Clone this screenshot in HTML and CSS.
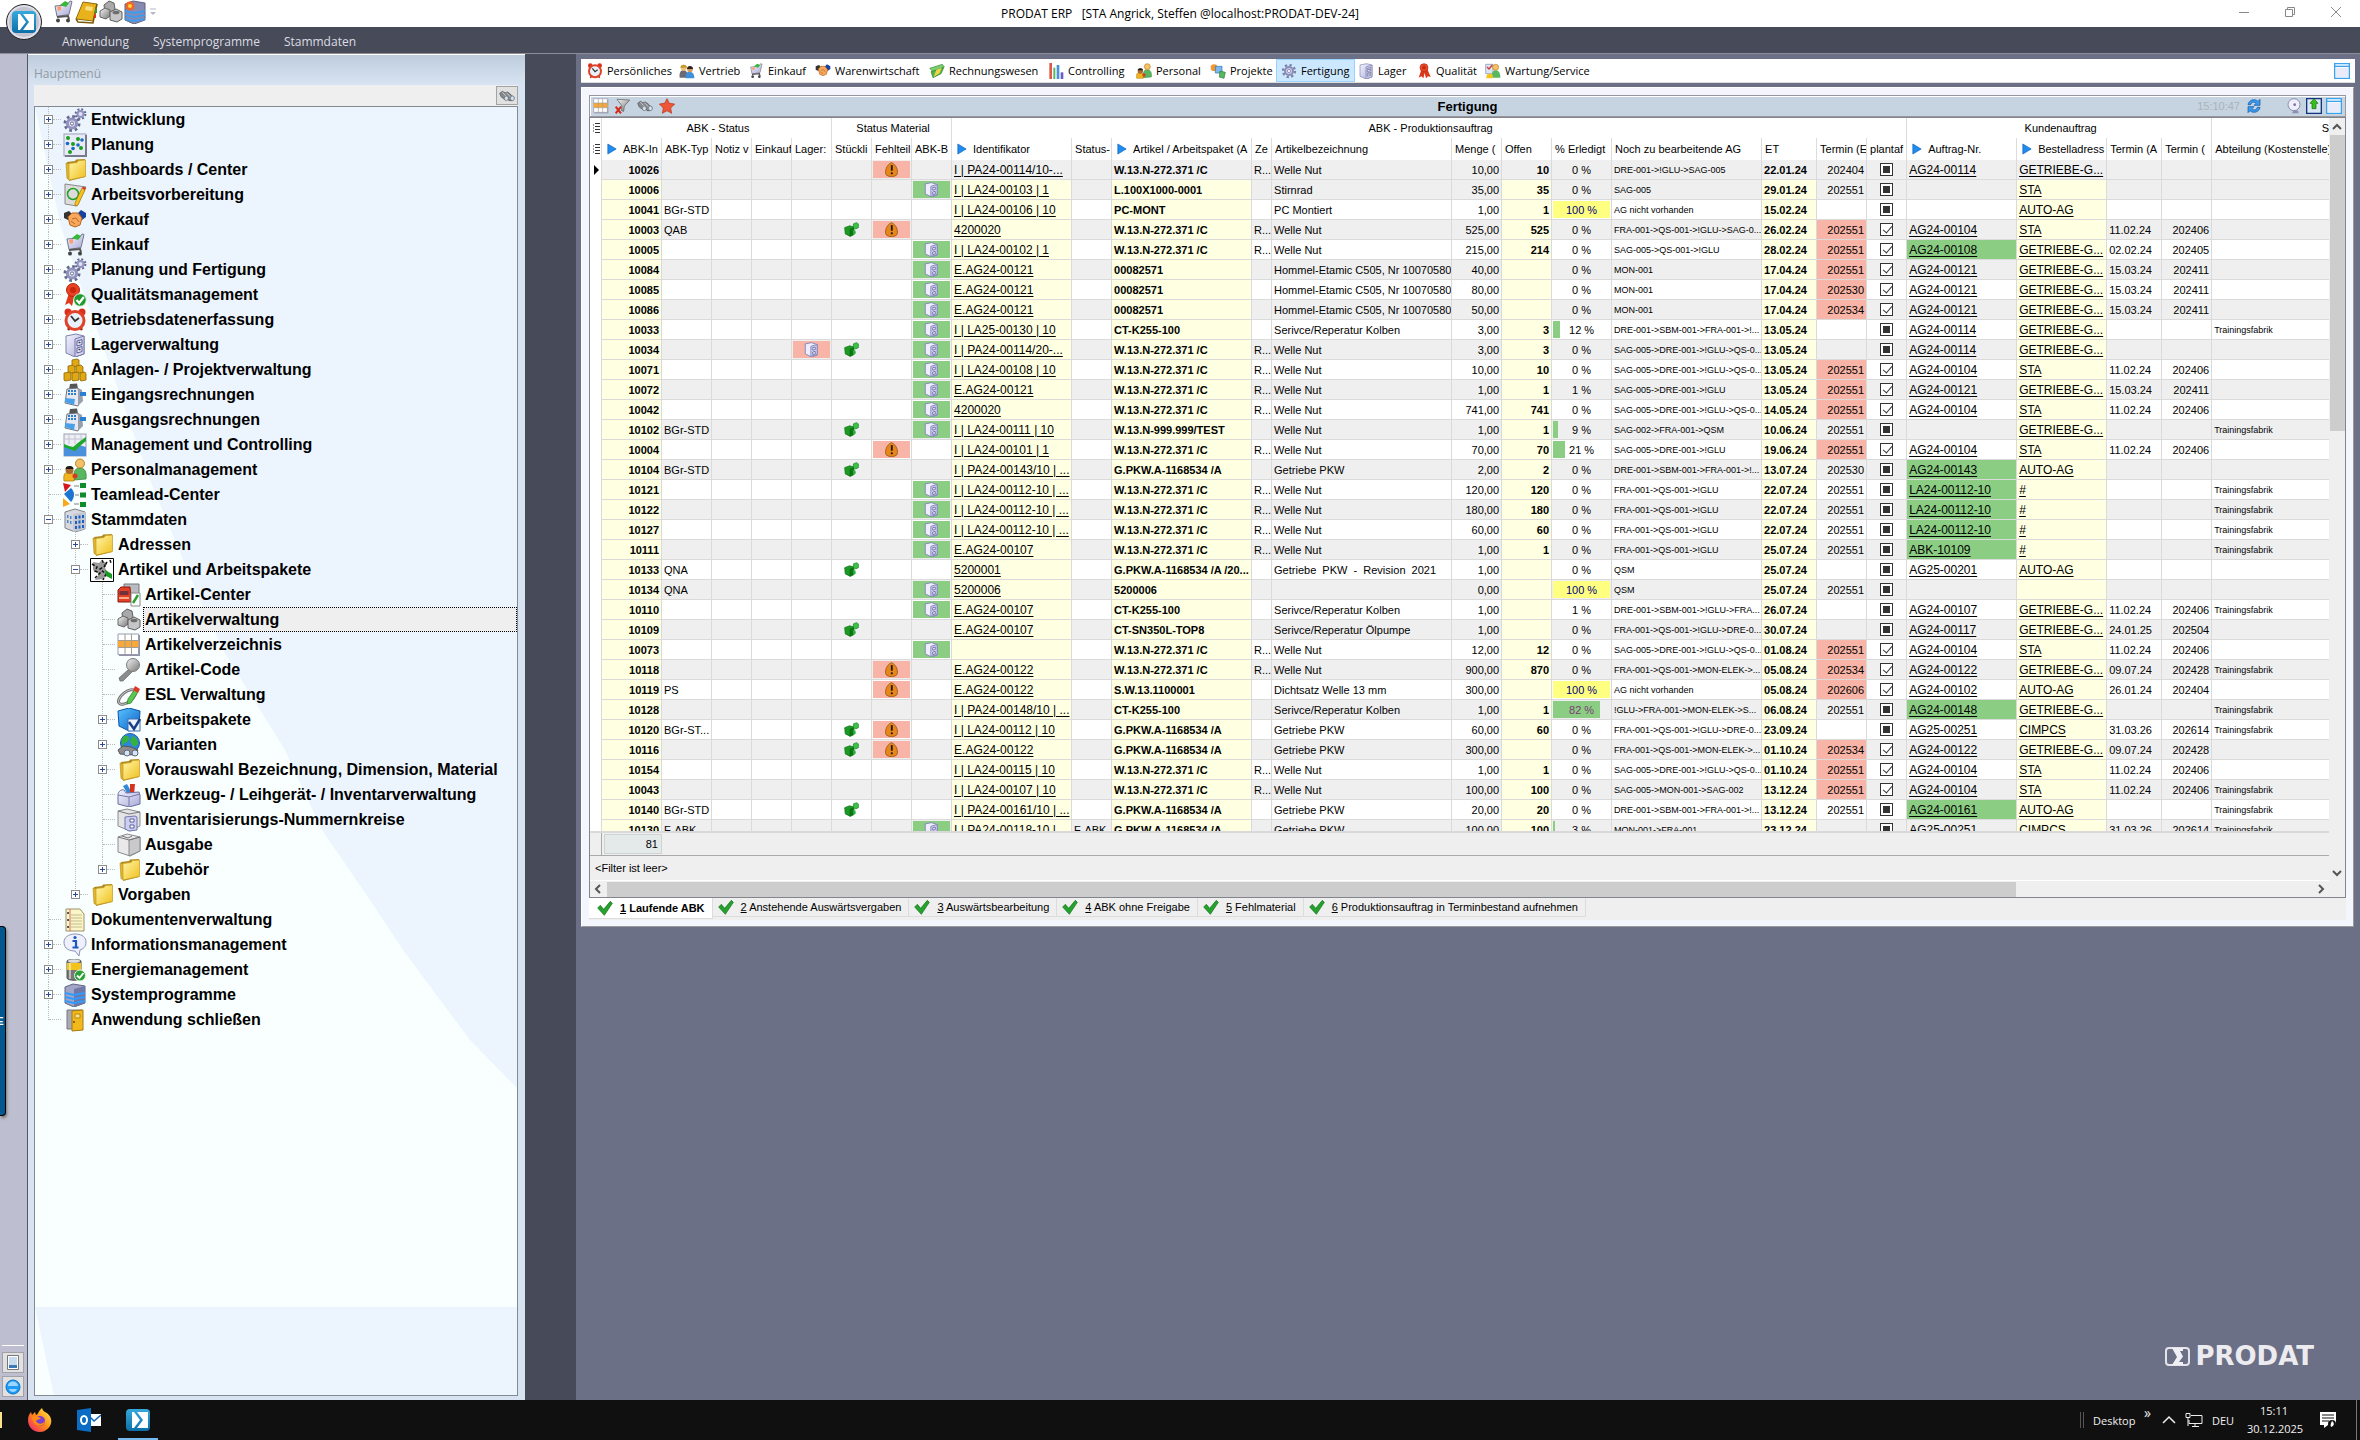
FILE: index.html
```html
<!DOCTYPE html>
<html lang="de">
<head>
<meta charset="utf-8">
<meta name="viewport" content="width=device-width, initial-scale=1">
<title>PRODAT ERP</title>
<link rel="stylesheet" href="styles.css">
</head>
<body>
<svg class="sprite" aria-hidden="true">
<defs>
<linearGradient id="gFold" x1="0" y1="0" x2="1" y2="1"><stop offset="0" stop-color="#fff6a8"/><stop offset="1" stop-color="#f0bf1c"/></linearGradient>
<linearGradient id="gMetal" x1="0" y1="0" x2="1" y2="1"><stop offset="0" stop-color="#f4f4f4"/><stop offset="1" stop-color="#777"/></linearGradient>
<linearGradient id="gLav" x1="0" y1="0" x2="1" y2="1"><stop offset="0" stop-color="#f4f4ff"/><stop offset="1" stop-color="#a9aad6"/></linearGradient>
<linearGradient id="gBlue" x1="0" y1="0" x2="1" y2="1"><stop offset="0" stop-color="#5cc4ff"/><stop offset="1" stop-color="#0a5fc4"/></linearGradient>
<linearGradient id="gFire" x1="1" y1="0" x2="0" y2="1"><stop offset="0" stop-color="#fff44f"/><stop offset=".5" stop-color="#ff8a16"/><stop offset="1" stop-color="#f0197a"/></linearGradient>
<linearGradient id="gPro" x1="0" y1="0" x2="0" y2="1"><stop offset="0" stop-color="#36a9dc"/><stop offset="1" stop-color="#0b6fa8"/></linearGradient>
</defs>
<symbol id="gear" viewBox="0 0 24 24"><circle cx="12" cy="12" r="9" fill="none" stroke="#7c7fa6" stroke-width="3.4" stroke-dasharray="3.5 3.5"/><circle cx="12" cy="12" r="6" fill="#cfd0ee" stroke="#8a8cb8" stroke-width="3"/><circle cx="12" cy="12" r="2.4" fill="#fff" stroke="#6d6f98"/></symbol>
<symbol id="gears" viewBox="0 0 24 24"><circle cx="9" cy="15.5" r="7" fill="none" stroke="#66698f" stroke-width="3" stroke-dasharray="2.7 2.8"/><circle cx="9" cy="15.5" r="4.6" fill="#dfe0f5" stroke="#9193bd" stroke-width="3"/><circle cx="9" cy="15.5" r="1.6" fill="#fff" stroke="#66698f"/><circle cx="17.5" cy="6" r="4.8" fill="none" stroke="#66698f" stroke-width="2.2" stroke-dasharray="1.9 1.9"/><circle cx="17.5" cy="6" r="3" fill="#dfe0f5" stroke="#9193bd" stroke-width="2"/></symbol>
<symbol id="plan" viewBox="0 0 24 24"><rect x="1" y="1" width="22" height="22" fill="#e9eaf8" stroke="#9ea0b8"/><path d="M23 2v21H2" fill="none" stroke="#77798c" stroke-width="2"/><g fill="#18a018"><circle cx="5" cy="5" r="2"/><circle cx="10" cy="11" r="2"/><circle cx="15" cy="6" r="2"/><circle cx="18" cy="15" r="2"/><circle cx="7" cy="19" r="2"/></g><g fill="#1668c8"><circle cx="4.500" cy="10.500" r="1.800"/><circle cx="19" cy="7" r="1.800"/><circle cx="15" cy="12" r="1.800"/><circle cx="10" cy="15.500" r="1.800"/></g></symbol>
<symbol id="folder" viewBox="0 0 24 24"><path d="M4 4l8-1 1-1.500 9-.5v18l-16 4z" fill="#b08a1d"/><path d="M3 5l4 1v16l-3-1.500z" fill="#e3b52a" stroke="#b08a1d" stroke-width=".6"/><path d="M6 5.500l8-1 1.500-2 7-.5v16.500L6 22z" fill="url(#gFold)" stroke="#c49a1f" stroke-width=".7"/></symbol>
<symbol id="draft" viewBox="0 0 24 24"><path d="M2 1l21 3-9 19-12-2z" fill="#dcdcdc" stroke="#8a8a8a"/><circle cx="10" cy="11" r="5.500" fill="none" stroke="#1fa01f" stroke-width="1.500"/><path d="M19 5l3 2-7 15-3 1 0-3z" fill="#f6c21c" stroke="#a87a10" stroke-width=".7"/><path d="M19 5l3 2 1-2-3-1.500z" fill="#d8321e"/></symbol>
<symbol id="shake" viewBox="0 0 24 24"><path d="M1 5l5-2 3 3-4 6-4-2z" fill="#333"/><path d="M23 5l-5-3-4 4 5 6 4-3z" fill="#1740a0"/><path d="M5 9l4-4h6l4 5-2 7-5 2-5-2z" fill="#f6a85e" stroke="#bb6218"/><path d="M9 11l4-1 3 4M8 13l4 3" fill="none" stroke="#c46a20"/></symbol>
<symbol id="cart" viewBox="0 0 24 24"><path d="M4 6l12-1 3-4 2 .5-3 13-12 2z" fill="url(#gLav)" stroke="#77788c"/><path d="M9 5l5-4 4 2-3 4z" fill="#38b838"/><path d="M6 7l4-1v4l-3 1z" fill="#ff9d72"/><path d="M6 17l11-1 1 3" fill="none" stroke="#555" stroke-width="2"/><circle cx="7" cy="20.500" r="2" fill="#444"/><circle cx="17" cy="20.500" r="2" fill="#444"/></symbol>
<symbol id="ribbon" viewBox="0 0 24 24"><path d="M8 10L4 22l4-2 3 3 2-8 2 8 3-3 4 1-5-12z" fill="#d93a1e"/><circle cx="12" cy="7" r="6" fill="#ea4a2a" stroke="#b12a12"/><circle cx="12" cy="7" r="2.800" fill="#c92b12"/></symbol>
<symbol id="award" viewBox="0 0 24 24"><path d="M6 10L2 22l4-2 3 3 2-8 1-5z" fill="#e03a1e"/><circle cx="10" cy="7" r="6.500" fill="#ea4024" stroke="#b12a12"/><circle cx="10" cy="7" r="3" fill="#c9260f"/><circle cx="17" cy="17" r="6.300" fill="#1f9a2c" stroke="#e9f6ea"/><path d="M13.500 17l2.800 3 4.500-6" fill="none" stroke="#fff" stroke-width="2.200"/></symbol>
<symbol id="clock" viewBox="0 0 24 24"><circle cx="5" cy="4" r="3.500" fill="#d8321e"/><circle cx="19" cy="4" r="3.500" fill="#d8321e"/><path d="M5 22l3-4M19 22l-3-4" stroke="#a02010" stroke-width="2.500"/><circle cx="12" cy="12.500" r="9" fill="#e8f2fb" stroke="#e0432a" stroke-width="3"/><path d="M8 8l4 5 4-3" fill="none" stroke="#333" stroke-width="1.800"/></symbol>
<symbol id="cabinet" viewBox="0 0 24 24"><path d="M3 3l10-2 8 2v18l-9 3-9-4z" fill="url(#gLav)" stroke="#8284ad"/><path d="M12 6v18l9-3V3z" fill="#d2d3f0" stroke="#7779a5"/><path d="M14 8l5-1.500v5L14 13zM14 15l5-1.500v5L14 20z" fill="#eef" stroke="#5d5f95"/><path d="M15.500 9.500h2M15.500 16.500h2" stroke="#334" stroke-width="1.500"/></symbol>
<symbol id="drawer" viewBox="0 0 24 24"><path d="M2 3l10-2 9 3v17l-9 3-10-5z" fill="#eeeeff" stroke="#8587b8" stroke-width="1.500"/><path d="M11 7v16l10-3V4z" fill="#d6d7f6" stroke="#7f81b4" stroke-width="1.500"/><path d="M14 9l4-1v4l-4 1zM14 16l4-1v4l-4 1z" fill="#fff" stroke="#6a6ca6" stroke-width="1.500"/></symbol>
<symbol id="gold" viewBox="0 0 24 24"><g fill="#e0a812" stroke="#8d6607" stroke-width=".8"><path d="M9 2l5-1 2 1v6l-6 1-1-1z"/><path d="M5 8l5-1 2 2v6l-6 0-1-1z"/><path d="M13 8l5-1 2 2v6h-6l-1-1z"/><path d="M1 15l6-1 1 2v6l-6 1-1-1z"/><path d="M9 15l6-1 1 2v6l-6 1-1-1z"/><path d="M17 15l5-1 1 2v6l-5 1-1-1z"/></g></symbol>
<symbol id="register" viewBox="0 0 24 24"><path d="M7 1l7-.500 1 5-9 1z" fill="#555"/><path d="M4 6l11-1 2 12-2 6-13-3z" fill="#e6e9f0" stroke="#70747e"/><path d="M15 5l4 2 1 11-5 5z" fill="#9aa0ab"/><path d="M5 8h8M5 11h8" stroke="#2b7fd0" stroke-width="2" stroke-dasharray="2 1"/><path d="M2 15l10 1-1 6-9-3z" fill="#49a0ea"/><path d="M17 9h6v4h-6z" fill="#2b7fd0"/></symbol>
<symbol id="chart" viewBox="0 0 24 24"><rect x="1" y="1" width="22" height="22" fill="#eeeef6" stroke="#9ea0b0"/><path d="M6 1v10M12 1v10M18 1v10M1 6h22" stroke="#c3c4d4"/><path d="M1 13l5 2 4 2 6-5 7 2v9H1z" fill="#4a90dc"/><path d="M1 11l5 2 4 1 6-5 7-5v4l-6 5-5 5-6-2-5-2z" fill="#1ea82c"/></symbol>
<symbol id="people" viewBox="0 0 24 24"><path d="M11 22c-1-10 2-12 6-12s7 3 6 11z" fill="#58b860" stroke="#2b7d33" stroke-width=".7"/><circle cx="17" cy="5.500" r="4.500" fill="#f4c169" stroke="#b98425"/><path d="M1 23c-1-7 1-9 5-9s6 3 5 9z" fill="#f1b41e" stroke="#a87808" stroke-width=".7"/><circle cx="6.500" cy="12" r="4" fill="#a86a30"/><path d="M2.500 11c0-4 8-4 8 0z" fill="#1d1a18"/><circle cx="12" cy="18" r="2.500" fill="#d43a2a"/></symbol>
<symbol id="people2" viewBox="0 0 24 24"><path d="M1 22c-1-9 2-11 6-11s6 3 6 11z" fill="#6a6a72"/><circle cx="7" cy="7" r="4.500" fill="#efc078"/><path d="M2 7c0-6 10-6 10 0z" fill="#c59a28"/><path d="M10 23c-1-8 2-10 6-10s7 3 7 10z" fill="#3f8edb"/><circle cx="16.500" cy="9.500" r="4.300" fill="#d79a5e"/><path d="M12 9c0-6 9-6 9 0z" fill="#2b221c"/></symbol>
<symbol id="service" viewBox="0 0 24 24"><path d="M1 2h11v14H1z" fill="#dbe5f5" stroke="#7b8db5"/><path d="M3 6l3 3 5-6" fill="none" stroke="#d43a2a" stroke-width="2"/><path d="M10 22c0-8 2-11 6-11s7 3 7 11z" fill="#58b860"/><circle cx="16" cy="6.500" r="4.500" fill="#f4c169" stroke="#b98425"/><path d="M2 23c0-5 1-7 5-7s5 2 5 7z" fill="#f1c41e"/></symbol>
<symbol id="team" viewBox="0 0 24 24"><path d="M0 0l8 2-6 7z" fill="#d8151c"/><path d="M1 11l7-6c4 4 4 9 0 14z" fill="#1b75d0"/><path d="M0 15l7 6-7 3z" fill="#f7a91b"/><path d="M11 3h5M12 12h4M11 21h5" stroke="#aaa" stroke-width="1.500"/><path d="M17 0h6v5h-6zM17 9.500h6v5h-6zM17 19h6v5h-6z" fill="#0e8c2c"/></symbol>
<symbol id="building" viewBox="0 0 24 24"><path d="M2 4l10-3 10 3v17l-10 3-10-4z" fill="#d7d9de" stroke="#7d808a"/><path d="M10 6l12-2v17l-12 3z" fill="#c3c7d1"/><path d="M12 8h2v3h-2zM15.500 7.500h2v3h-2zM19 7h2v3h-2zM12 13h2v3h-2zM15.500 12.500h2v3h-2zM19 12h2v3h-2zM12 18h2v3h-2zM15.500 17.500h2v3h-2zM19 17h2v3h-2z" fill="#1b5fc0"/><path d="M4 7h1.500v3H4zM7 8h1.500v3H7zM4 12h1.500v3H4zM7 13h1.500v3H7z" fill="#4e86d0"/></symbol>
<symbol id="artikel" viewBox="0 0 24 24"><path d="M.5.5h23v23H.5z" fill="#fff" stroke="#000"/><path d="M3 4l6 1 2-2 6 2-2 5 4 6-6 5-8 1 4-6-6-4z" fill="#9a9a9a"/><path d="M2 6l5 3-2 4 5 2-5 5M12 2l3 6-5 3 6 5-3 6M17 4l-3 5M20 2l1 3" fill="none" stroke="#111" stroke-width="1.500" stroke-dasharray="3 2"/><path d="M15 12l7 4v5l-6-3z" fill="#199a25"/></symbol>
<symbol id="truck" viewBox="0 0 24 24"><path d="M7 1h15v16H7z" fill="#b9bcc3" stroke="#777"/><path d="M1 7l3-3h9l1 15H1z" fill="#e2402a" stroke="#8d1a0c"/><path d="M2.500 8h9v4h-9z" fill="#71323a"/><path d="M2 15h10" stroke="#ffd0a0" stroke-width="1.500"/><path d="M14 10h9v13h-9z" fill="#fff" stroke="#888"/><path d="M21 12l-5 8" stroke="#2ba035" stroke-width="2.500"/></symbol>
<symbol id="nuts" viewBox="0 0 24 24"><path d="M5 5l5-4 5 2 1 6-4 5-6-1z" fill="#a9a9a9" stroke="#606060"/><path d="M1 11l5-3 5 2v6l-4 3-6-2z" fill="url(#gMetal)" stroke="#666"/><path d="M11 12l6-3 6 3v7l-5 3-7-2z" fill="#c6c6c6" stroke="#5e5e5e"/><ellipse cx="17" cy="12.500" rx="3.500" ry="1.800" fill="#6d6d6d"/></symbol>
<symbol id="gridi" viewBox="0 0 24 24"><path d="M2 2h21v21H2z" fill="#8f92a8"/><path d="M1 1h20.500v20.500H1z" fill="#fff" stroke="#9a9cae"/><path d="M1 7.500h20.500v7H1z" fill="#f7a838"/><path d="M8 1v20.500M14.500 1v20.500M1 7.500h20.500M1 14.500h20.500" stroke="#a39c90"/></symbol>
<symbol id="pin" viewBox="0 0 24 24"><path d="M12 11L2 20l1 3h3l9-9z" fill="#8c8c8c" stroke="#666" stroke-width=".7"/><circle cx="16" cy="7" r="6.500" fill="url(#gMetal)" stroke="#7b7b7b"/></symbol>
<symbol id="esl" viewBox="0 0 24 24"><ellipse cx="10" cy="14" rx="10" ry="5" transform="rotate(-38 10 14)" fill="none" stroke="#6e6e6e" stroke-width="3"/><ellipse cx="10" cy="14" rx="10" ry="5" transform="rotate(-38 10 14)" fill="none" stroke="#c9c9c9"/><path d="M18 6l3 3-7 11-4 1 1-5z" fill="#58c94e" stroke="#2b7a24" stroke-width=".7"/><path d="M18 3l5 3-2 4-5-3z" fill="#dc3a2a"/></symbol>
<symbol id="bluebox" viewBox="0 0 24 24"><path d="M1 3l11-3 11 3-1 16-10 4-10-5z" fill="url(#gBlue)" stroke="#0c56a8"/><path d="M11 11h12v12H11z" fill="#eef4ff" stroke="#3a6fb4"/><path d="M12 14l5 7 6-10" fill="none" stroke="#173f86" stroke-width="2.500"/></symbol>
<symbol id="globe" viewBox="0 0 24 24"><circle cx="13" cy="10" r="9.500" fill="#2c86e0" stroke="#1c5ea8"/><path d="M6 4c4-3 7 0 6 3s-6 2-6 6-3-4 0-9zM15 3c4 1 6 4 6 8l-4 3-4-5z" fill="#38b03e"/><path d="M1 17l5-4 8 1 7 3-3 5-15-1z" fill="#8d8d8d" stroke="#555"/><circle cx="10" cy="20" r="3" fill="#cfe6fb" stroke="#667"/><circle cx="18" cy="20" r="3" fill="#cfe6fb" stroke="#667"/></symbol>
<symbol id="toolbox" viewBox="0 0 24 24"><path d="M6 3l4-2 5 9-4 2z" fill="#3388d8"/><path d="M13 1h5l-1 11h-4z" fill="#d8331f"/><path d="M1 12c0-4 4-6 6-5l2 3 13-1 1 3v9l-11 3-11-3z" fill="url(#gLav)" stroke="#6b6da0"/><path d="M12 14v10M1 12l11 2 11-3" fill="none" stroke="#7678aa"/></symbol>
<symbol id="box" viewBox="0 0 24 24"><path d="M1 4l9-3 13 3v14l-10 5-12-4z" fill="#e9e9ea" stroke="#8b8b8e"/><path d="M12 7v16l11-5V4z" fill="#c9c9cc" stroke="#88888c"/><path d="M1 4l11 3 11-3M5 3l6 2 4-2" fill="none" stroke="#77777c"/></symbol>
<symbol id="invbox" viewBox="0 0 24 24"><path d="M1 3l9-2 13 3v14l-10 5-12-5z" fill="#e4e4e6" stroke="#8b8b8e"/><path d="M1 3l11 3 11-2" fill="none" stroke="#77777c"/><path d="M8 9l10-1 2 1v13l-8 1-4-2z" fill="#cdcff2" stroke="#7477ac"/><path d="M13 11h4v3h-4zM13 17h4v3h-4z" fill="#fff" stroke="#5d5f95"/></symbol>
<symbol id="doc" viewBox="0 0 24 24"><path d="M3 1h14l4 5v17H3z" fill="#fbf6c8" stroke="#9a9270"/><path d="M7 1v22" stroke="#dd6b5c"/><path d="M8 7h11M8 10h11M8 13h11M8 16h11M8 19h11" stroke="#c1bb8e"/><path d="M5 5h.1M5 12h.1M5 19h.1" stroke="#333" stroke-width="2" stroke-linecap="round"/></symbol>
<symbol id="info" viewBox="0 0 24 24"><path d="M12 1c8 0 11 4 11 8 0 5-3 7-6 8l-1 6-4-5C3 18 1 13 1 9s4-8 11-8z" fill="#eef0fd" stroke="#8f91b4"/><circle cx="12" cy="4.500" r="1.600" fill="#1c58c0"/><path d="M9.500 8H13v6M9.500 14.500h6" fill="none" stroke="#1c58c0" stroke-width="2.200"/></symbol>
<symbol id="battery" viewBox="0 0 24 24"><path d="M4 3c0-2 14-2 14 0v17c0 3-14 3-14 0z" fill="#777" stroke="#555"/><path d="M4 5h14v7H4z" fill="#f3c21b"/><ellipse cx="11" cy="3" rx="6" ry="1.800" fill="#ddd"/><path d="M7 5v16" stroke="#fff" stroke-opacity=".5" stroke-width="2"/><circle cx="17" cy="17.500" r="5.500" fill="#2ba036" stroke="#e6f5e6"/><path d="M14 17.500l2.500 2.500 4-5" fill="none" stroke="#fff" stroke-width="1.800"/></symbol>
<symbol id="server" viewBox="0 0 24 24"><path d="M2 4l8-3 12 2v17l-11 4-9-4z" fill="#a2a5c6" stroke="#60637f"/><path d="M11 6l11-3v17l-11 4z" fill="#7078a8"/><path d="M2 10l9 2 11-2M2 14l9 2 11-2M2 18l9 2 11-2" fill="none" stroke="#2f9bff" stroke-width="2"/></symbol>
<symbol id="server2" viewBox="0 0 24 24"><path d="M2 4l8-3 12 2v17l-11 4-9-4z" fill="#888bb0" stroke="#60637f"/><path d="M2 11l9 2 11-2M2 15l9 2 11-2M2 19l9 2 11-2" fill="none" stroke="#3f9bf0" stroke-width="2"/><circle cx="7" cy="6" r="4.500" fill="#f0642a"/><circle cx="7" cy="6" r="2" fill="#ffd23c"/></symbol>
<symbol id="door" viewBox="0 0 24 24"><path d="M4 2h15v19H4z" fill="#a8aab4" stroke="#757784"/><path d="M9 3l11-1v20l-11 1z" fill="#f2b91c" stroke="#a67a0a"/><path d="M12 6h5v4h-5z" fill="#fbe08a" stroke="#b98a12"/><circle cx="11" cy="14" r="1" fill="#6b4c00"/></symbol>
<symbol id="book" viewBox="0 0 24 24"><path d="M8 2l14 2-4 17-17-2z" fill="#e8b21a" stroke="#8f6a0a"/><path d="M11 6l7 1-1 4-7-1z" fill="#f9df80"/><path d="M1 19l2 3 15 1 4-19" fill="none" stroke="#7a5a08" stroke-width="1.500"/><path d="M21 9v4" stroke="#2a9b3a" stroke-width="2"/><path d="M20 14v4" stroke="#d43a2a" stroke-width="2"/></symbol>
<symbol id="bino" viewBox="0 0 24 24"><path d="M1 8l4-3 4 2 4-1 5 4 5 5-3 4-5 0-3-4-4 2-5-4z" fill="#85888d" stroke="#505256"/><path d="M5 6l6 7M11 7l7 7" stroke="#c6c8cc" stroke-width="1.500"/><ellipse cx="11" cy="15.500" rx="3" ry="3.500" fill="#cfe2f4" stroke="#666"/><ellipse cx="20" cy="15.500" rx="3" ry="3.500" fill="#cfe2f4" stroke="#666"/></symbol>
<symbol id="filter" viewBox="0 0 24 24"><path d="M3 2l19 1-8 9-1 8-3-1V11z" fill="url(#gMetal)" stroke="#555"/><path d="M1 13l8 10M9 13L1 23" stroke="#d42a18" stroke-width="3"/></symbol>
<symbol id="star" viewBox="0 0 24 24"><path d="M12 1l3.500 7 8 1-6 6 1.500 8-7-4-7 4 1.500-8-6-6 8-1z" fill="#ee5636" stroke="#b52f16"/></symbol>
<symbol id="money" viewBox="0 0 24 24"><path d="M1 8L20 2l3 4L6 13z" fill="#7ccf70" stroke="#3b8d35"/><path d="M3 13l19-6-4 9-12 6z" fill="#4fb548" stroke="#2e7d2a"/><path d="M11 10l8-3-3 8-9 6z" fill="#f1d34a"/></symbol>
<symbol id="bars" viewBox="0 0 24 24"><path d="M2 0h4v24H2z" fill="#e2574c"/><path d="M8 7h3v17H8z" fill="#58b860"/><path d="M13 3h4v21h-4z" fill="#4a90dc"/><path d="M19 14h4v10h-4z" fill="#6a5acd"/></symbol>
<symbol id="proj" viewBox="0 0 24 24"><circle cx="6" cy="7" r="5" fill="#f29a2e"/><path d="M8 5h10v10H8z" fill="#7db9f0" stroke="#2d6fb4"/><path d="M15 12l8 2-2 9-7-2z" fill="#58b860" stroke="#2b7d33"/></symbol>
<symbol id="warn" viewBox="0 0 24 24"><path d="M12 1c8 3 12 15 8 20-3 3-13 3-16 0C0 16 4 4 12 1z" fill="#e8861a" stroke="#8a5010" stroke-width="1.200"/><path d="M12.500 5v9" stroke="#1c1c1c" stroke-width="3"/><circle cx="12.500" cy="18" r="1.800" fill="#1c1c1c"/></symbol>
<symbol id="cubes" viewBox="0 0 24 24"><path d="M1 9l8-3 7 2v12l-6 3-8-4z" fill="#1b9a24" stroke="#0c6413"/><path d="M9 11v12l7-3V8z" fill="#0d7416"/><path d="M15 3l5-2 3 2v6l-4 2-4-2z" fill="#3cc347" stroke="#0f7a18"/><path d="M14 13l4 0 1 5-4 3z" fill="#2bb036"/></symbol>
<symbol id="check" viewBox="0 0 24 24"><path d="M1 12l4-4 5 6L20 2l3 3-12 18z" fill="#23a32c" stroke="#136a1a"/></symbol>
<symbol id="arrow" viewBox="0 0 12 12"><path d="M1 0l10 6-10 6z" fill="#1f8cf0" stroke="#0f62b8" stroke-width=".8"/></symbol>
<symbol id="refresh" viewBox="0 0 24 24"><path d="M3 10C4 3 13 0 18 5l3-3v9h-9l3-3c-3-3-7-2-8 2zM21 14c-1 7-10 10-15 5l-3 3v-9h9l-3 3c3 3 7 2 8-2z" fill="#3c9bea" stroke="#0c55a5"/></symbol>
<symbol id="dish" viewBox="0 0 24 24"><path d="M12 18l6 1 1 4H9z" fill="#8f8fb0"/><circle cx="12" cy="10" r="9" fill="#eeeefc" stroke="#8c8cae" stroke-width="1.500"/><circle cx="13" cy="10" r="2" fill="#77779c"/></symbol>
<symbol id="export" viewBox="0 0 24 24"><path d="M1 1h22v22H1z" fill="#d9e6f4" stroke="#12347c" stroke-width="2"/><path d="M12 1l6 7h-3v8H9V8H6z" fill="#35c01c" stroke="#136a0c"/></symbol>
<symbol id="window" viewBox="0 0 24 24"><path d="M1 1h22v22H1z" fill="#fff" stroke="#3ba3ee" stroke-width="2"/><path d="M3 7h18v14H3z" fill="#e9eafa"/><path d="M1 5h22" stroke="#3ba3ee" stroke-width="2"/></symbol>
<symbol id="prodat" viewBox="0 0 24 24"><rect x="0" y="1" width="24" height="22" rx="4" fill="url(#gPro)"/><path d="M6 4v16h2l6-8-6-8zM11 4h11v16H11l6-8z" fill="#fff"/></symbol>
<symbol id="firefox" viewBox="0 0 24 24"><path d="M12 24C4 24 0 18 0 12c0-3 1-6 3-8l1 3 3-3 1 3c2 0 3-5 6-7 1 4 4 4 6 6 8 8 0 18-8 18z" fill="url(#gFire)"/><circle cx="12" cy="13" r="5" fill="#7a3fd0"/><path d="M4 9c4-2 6 0 9 1-1 2-4 1-5 3 2 4 7 3 9 0-1 7-12 7-13-4z" fill="#ff8a16"/></symbol>
<symbol id="outlook" viewBox="0 0 24 24"><path d="M11 6h13v12H11z" fill="#fff"/><path d="M12 8l5 5 7-6" fill="none" stroke="#0a66b8" stroke-width="1.500"/><path d="M0 2l14-2v24L0 22z" fill="#0a6cc4"/><ellipse cx="7" cy="12" rx="3" ry="4" fill="none" stroke="#fff" stroke-width="2"/></symbol>
</svg>

<header class="titlebar">
  <button class="orb" aria-label="Anwendungsmenü"><svg class="i24"><use href="#prodat"/></svg></button>
  <div class="quick">
    <button aria-label="Einkauf"><svg class="i24"><use href="#cart"/></svg></button>
    <button aria-label="Adressen"><svg class="i24"><use href="#book"/></svg></button>
    <button aria-label="Artikel"><svg class="i24"><use href="#nuts"/></svg></button>
    <button aria-label="Systemprogramme"><svg class="i24"><use href="#server2"/></svg></button>
    <button aria-label="Mehr"><svg class="i12" viewBox="0 0 12 12"><path d="M3 3h6" stroke="#b6b6c4"/><path d="M3 6h6L6 9z" fill="#b6b6c4"/></svg></button>
  </div>
  <h1>PRODAT ERP &nbsp; [STA Angrick, Steffen @localhost:PRODAT-DEV-24]</h1>
  <div class="winctl">
    <button aria-label="Minimieren"><svg class="i12" viewBox="0 0 12 12"><path d="M1 6.500h10" stroke="#888"/></svg></button>
    <button aria-label="Wiederherstellen"><svg class="i12" viewBox="0 0 12 12"><path d="M1.500 3.500h7v7h-7zM3.500 3V1.500h7v7H9" fill="none" stroke="#888"/></svg></button>
    <button aria-label="Schließen"><svg class="i12" viewBox="0 0 12 12"><path d="M1 1l10 10M11 1L1 11" stroke="#888"/></svg></button>
  </div>
</header>
<nav class="menubar"><a href="#">Anwendung</a><a href="#">Systemprogramme</a><a href="#">Stammdaten</a></nav>

<div class="workspace">
  <aside class="strip">
    <button class="flyout" aria-label="Seitenleiste">E</button>
    <div class="tools">
      <button aria-label="Liste"><svg class="i16" viewBox="0 0 16 16"><path d="M2.500.5h11v14h-11z" fill="#fff" stroke="#777"/><path d="M4 3h8M4 5h8M4 7h8M4 9h8" stroke="#8fb8dc"/><path d="M4 10h8v3H4z" fill="#3b79b8"/></svg></button>
      <button aria-label="Online"><svg class="i16" viewBox="0 0 16 16"><circle cx="8" cy="8" r="7" fill="#1f9bf5" stroke="#0c70c8"/><path d="M3 7c0-6 10-6 10 0zM4 10h8c-1 4-7 4-8 0z" fill="#9ad6ff"/></svg></button>
    </div>
  </aside>
  <section class="mainmenu">
    <h2>Hauptmenü</h2>
    <form class="search"><input type="text" aria-label="Menü durchsuchen"><button type="button" aria-label="Suchen"><svg class="i16"><use href="#bino"/></svg></button></form>
    <div class="treebox"><ul class="tree" id="tree"></ul></div>
  </section>
  <div class="divider"></div>
  <main class="desk">
    <nav class="modules" id="modules"></nav>
    <section class="window">
      <header class="wintitle">
        <div class="group">
          <button aria-label="Tabelle"><svg class="i16"><use href="#gridi"/></svg></button>
          <button aria-label="Filter löschen"><svg class="i16"><use href="#filter"/></svg></button>
          <button aria-label="Suchen"><svg class="i16"><use href="#bino"/></svg></button>
          <button aria-label="Favorit"><svg class="i16"><use href="#star"/></svg></button>
        </div>
        <h2>Fertigung</h2>
        <div class="group end">
          <time>15:10:47</time>
          <button aria-label="Aktualisieren"><svg class="i16"><use href="#refresh"/></svg></button>
          <span class="sep"></span>
          <button aria-label="Überwachen"><svg class="i16"><use href="#dish"/></svg></button>
          <button aria-label="Export"><svg class="i16"><use href="#export"/></svg></button>
          <button aria-label="Fenster"><svg class="i16"><use href="#window"/></svg></button>
        </div>
      </header>
      <div class="gridbox">
        <div class="gridmain">
          <div class="clip">
          <table class="grid">
            <colgroup id="cols"></colgroup>
            <thead>
              <tr class="bands">
                <th><svg class="i12" viewBox="0 0 12 12"><path d="M5 1.500h5M5 4.500h5M5 7.500h5M5 10.500h5M3 3h1M3 6h1M3 9h1" stroke="#333"/></svg></th>
                <th colspan="5">ABK - Status</th><th colspan="3">Status Material</th><th colspan="12">ABK - Produktionsauftrag</th><th colspan="4">Kundenauftrag</th><th class="r">S</th>
              </tr>
              <tr class="heads" id="heads"></tr>
            </thead>
            <tbody id="rows"></tbody>
          </table>
          </div>
          <div class="sums"><span class="sumind"></span><output>81</output></div>
          <div class="filterline">&lt;Filter ist leer&gt;</div>
        </div>
        <div class="vscroll">
          <svg class="i12" viewBox="0 0 12 12"><path d="M2 8l4-4 4 4" fill="none" stroke="#555" stroke-width="2"/></svg>
          <span class="thumb"></span>
          <svg class="i12" viewBox="0 0 12 12"><path d="M2 4l4 4 4-4" fill="none" stroke="#555" stroke-width="2"/></svg>
        </div>
        <div class="hscroll">
          <svg class="i12" viewBox="0 0 12 12"><path d="M8 2L4 6l4 4" fill="none" stroke="#555" stroke-width="2"/></svg>
          <span class="track"><span class="thumb"></span></span>
          <svg class="i12" viewBox="0 0 12 12"><path d="M4 2l4 4-4 4" fill="none" stroke="#555" stroke-width="2"/></svg>
        </div>
      </div>
      <div class="tabs">
        <button class="on"><svg class="i16"><use href="#check"/></svg><span><u>1</u> Laufende ABK</span></button>
        <button><svg class="i16"><use href="#check"/></svg><span><u>2</u> Anstehende Auswärtsvergaben</span></button>
        <button><svg class="i16"><use href="#check"/></svg><span><u>3</u> Auswärtsbearbeitung</span></button>
        <button><svg class="i16"><use href="#check"/></svg><span><u>4</u> ABK ohne Freigabe</span></button>
        <button><svg class="i16"><use href="#check"/></svg><span><u>5</u> Fehlmaterial</span></button>
        <button><svg class="i16"><use href="#check"/></svg><span><u>6</u> Produktionsauftrag in Terminbestand aufnehmen</span></button>
      </div>
    </section>
    <div class="brand"><svg viewBox="0 0 25 19" width="25" height="19"><rect x="1" y="1" width="23" height="17" rx="3" fill="none" stroke="#e4e4ea" stroke-width="2"/><path d="M7 1h11v3h-3l3 5.500-4 5.500h4v3H7l5-8z" fill="#f0f0f4"/></svg><span>PRODAT</span></div>
  </main>
</div>

<footer class="taskbar">
  <div class="apps">
    <button class="sliver" aria-label="Explorer"></button>
    <button aria-label="Firefox"><svg class="i24"><use href="#firefox"/></svg></button>
    <button aria-label="Outlook"><svg class="i24"><use href="#outlook"/></svg></button>
    <button class="active" aria-label="PRODAT"><svg class="i24"><use href="#prodat"/></svg></button>
  </div>
  <div class="tray">
    <span class="grip"></span>
    <span class="desktop">Desktop</span>
    <span class="more">»</span>
    <svg class="caret" viewBox="0 0 14 14"><path d="M1 10l6-6 6 6" fill="none" stroke="#eee" stroke-width="1.500"/></svg>
    <svg class="net" viewBox="0 0 18 16"><path d="M6 3.500h11v8H4V8M10 12v3M7 14.500h7M1 1.500h4v4H1zM3 6v8" fill="none" stroke="#eee"/></svg>
    <span class="lang">DEU</span>
    <time class="when">15:11<br>30.12.2025</time>
    <svg class="note" viewBox="0 0 18 18"><path d="M1 1h16v13H9l-4 3v-3H1z" fill="#fff"/><path d="M3 4h12M3 7h12M3 10h7" stroke="#101010"/><circle cx="13" cy="13" r="4" fill="#101010"/><path d="M13 10c3 2 2 5-1 6-1-2 0-4 1-6z" fill="#fff"/></svg>
  </div>
</footer>
<script src="app.js"></script>
</body>
</html>
```

FILE: styles.css
```css
* { box-sizing: border-box; }
html, body { height: 100%; margin: 0; }
body { display: flex; flex-direction: column; font: 11px "Liberation Sans", Arial, sans-serif; color: #000; background: #6b7086; overflow: hidden; }
button { margin: 0; padding: 0; border: 0; background: none; font: inherit; color: inherit; }
h1, h2, ul { margin: 0; padding: 0; font-weight: normal; list-style: none; }
a { color: inherit; }
svg { display: block; flex: none; }
.sprite { position: absolute; width: 0; height: 0; }
.i24 { width: 24px; height: 24px; }
.i16 { width: 16px; height: 16px; }
.i12 { width: 12px; height: 12px; }

/* title bar */
.titlebar { position: relative; display: grid; grid-template-columns: 1fr auto 1fr; align-items: center; height: 27px; flex: none; background: #fff; }
.titlebar h1 { font: 12px/24px "Open Sans", sans-serif; }
.orb { position: absolute; left: 6px; top: 4px; z-index: 2; display: grid; place-items: center; width: 36px; height: 36px; border: 1px solid #222; border-radius: 50%; background: #c3c4d0; box-shadow: inset 0 0 0 2px #dfe0ea; }
.quick { display: flex; align-items: center; padding-left: 51px; height: 24px; align-self: start; }
.winctl { display: flex; justify-content: flex-end; gap: 34px; padding-right: 18px; height: 24px; align-items: center; align-self: start; }
.menubar { display: flex; gap: 24px; align-items: center; flex: none; height: 27px; padding: 3px 62px 0; border-bottom: 1px solid #8c8d96; background: #474a59; color: #dcdde2; font: 12px "Open Sans", sans-serif; }
.menubar a { text-decoration: none; }

.workspace { display: flex; flex: 1; min-height: 0; }

/* left tool strip */
.strip { position: relative; width: 27px; flex: none; display: flex; flex-direction: column; justify-content: flex-end; background: #bdbecf; }
.flyout { position: absolute; left: 0; top: 872px; width: 6px; height: 190px; overflow: hidden; border: 1px solid #000; border-left: 0; border-radius: 0 4px 4px 0; background: #00588e; color: #fff; box-shadow: 1px 2px 3px #777; font-weight: bold; text-indent: -5px; }
.tools { display: flex; flex-direction: column; gap: 3px; margin: 0 3px 3px 2px; padding-top: 6px; border-top: 1px solid #fff; }
.tools button { display: grid; place-items: center; height: 21px; border: 1px solid #a2a2a6; background: #e1e1e1; }

/* main menu */
.mainmenu { display: flex; flex-direction: column; width: 498px; flex: none; padding: 0 7px 4px 6px; border-left: 1px solid #55565f; background: linear-gradient(#bccbdb, #d7e3f1 30px); box-shadow: inset 0 1px #fff; }
.mainmenu h2 { height: 31px; padding: 9px 0 0; font: 12px/22px "Open Sans", sans-serif; color: #929aa3; }
.search { display: flex; height: 21px; background: #efefef; }
.search input { flex: 1; border: 0; background: none; outline: 0; }
.search button { display: grid; place-items: center; width: 22px; height: 19px; margin-top: 1px; border: 1px solid #a3a3a3; background: #e1e1e1; }
.treebox { flex: 1; min-height: 0; overflow: hidden; border: 1px solid #828a94; background: #ecf4fd url("data:image/svg+xml,%3Csvg xmlns='http://www.w3.org/2000/svg' width='484' height='1200'%3E%3Cpath d='M0 0L15 70 26 120 45 176 74 256 115 373 167 498 191 548 250 643 287 723 335 793 368 843 435 933 484 983V1200H0Z' fill='%23f8fffe'/%3E%3C/svg%3E") repeat-y; }
.tree ul { padding-left: 27px; }
.tree li { position: relative; }
.tree li::before { content: ""; position: absolute; left: 13px; top: 0; bottom: 0; border-left: 1px dotted #bbb; }
.tree li:last-child::before { bottom: auto; height: 13px; }
.node { display: flex; align-items: center; height: 25px; }
.exp { position: relative; width: 9px; height: 9px; margin-left: 9px; border: 1px solid #8c8c8c; background: #fff linear-gradient(#2c4a9c, #2c4a9c) center / 5px 1px no-repeat; }
.exp.plus::after { content: ""; position: absolute; left: 3px; top: 1px; width: 1px; height: 5px; background: #2c4a9c; }
.exp.none { visibility: hidden; }
.node .dots { width: 8px; border-top: 1px dotted #bbb; margin-right: 2px; }
.node.leaf .dots { width: 12px; margin-left: -4px; }
.node a { flex: 1; height: 25px; margin-left: 2px; padding-left: 1px; border: 1px solid transparent; font: bold 16px/23px "Liberation Sans", Arial, sans-serif; text-decoration: none; white-space: nowrap; }
.node a.sel { border: 1px dotted #000; background: #efefef; }

.divider { width: 51px; flex: none; background: #474a59; }

/* desk */
.desk { flex: 1; min-width: 0; display: flex; flex-direction: column; padding: 5px 5px 33px; background: #6b7086; }
.modules { display: flex; flex: none; height: 24px; align-items: center; padding-left: 3px; background: #fff; border-bottom: 1px solid #ddd; font: 11px "Open Sans", sans-serif; }
.modules a { display: flex; gap: 4px; align-items: center; height: 23px; padding-left: 2px; border: 1px solid transparent; text-decoration: none; white-space: nowrap; }
.modules a.on { padding-left: 4px; background: #cce8ff; border-color: #99d1ff; }
.modules button { margin: 0 5px 0 auto; }

.window { flex: none; margin: 4px 1px 0 0; padding: 7px 7px 6px; border: 1px solid #999; border-top-color: #fff; border-left-color: #fff; background: #f3f6fc; }
.wintitle { display: grid; grid-template-columns: 1fr auto 1fr; align-items: center; height: 22px; border: 1px solid #97979c; box-shadow: inset 1px 1px #fff; background: #c6d3e0; }
.wintitle h2 { font: bold 13px "Liberation Sans", Arial, sans-serif; }
.wintitle .group { display: flex; align-items: center; gap: 6px; padding: 0 3px; }
.wintitle .end { justify-content: flex-end; gap: 4px; }
.wintitle time { color: #a9b3bc; margin-right: 2px; }
.wintitle .sep { width: 16px; }

/* data grid */
.gridbox { display: grid; grid-template-columns: minmax(0, 1fr) 16px; border: 1px solid #84858c; background: #efefef; }
.clip { max-height: 713px; overflow: hidden; background: #fff; }
.grid { width: 100%; table-layout: fixed; border-spacing: 0; white-space: nowrap; }
.c-12 { width: 12px; } .c-20 { width: 20px; } .c-40 { width: 40px; } .c-50 { width: 50px; } .c-55 { width: 55px; } .c-60 { width: 60px; }
.c-90 { width: 90px; } .c-110 { width: 110px; } .c-120 { width: 120px; } .c-140 { width: 140px; } .c-150 { width: 150px; } .c-180 { width: 180px; }
.grid th { padding: 0 0 0 3px; border-right: 1px solid #dcdcdc; font-weight: normal; overflow: hidden; text-align: left; }
.grid th:first-child { padding: 0; }
.bands th { height: 20px; text-align: center; }
.bands th.r { text-align: right; padding-right: 0; border: 0; }
.heads th { height: 22px; }
.heads div { display: flex; align-items: center; overflow: hidden; }
.heads .i12 { width: 10px; margin: 0 6px 0 2px; }
.heads th:first-child .i12 { width: 12px; margin: 0; }
.grid td { position: relative; height: 20px; padding: 0 2px; border-right: 1px solid #dadada; border-bottom: 1px solid #dadada; overflow: hidden; line-height: 18px; }
.grid td:last-child, .grid th:last-child { border-right: 0; }
.grid tbody tr:nth-child(even) td, .grid tbody tr:first-child td { background: #efefef; }
.grid tbody tr:nth-child(n+2) td.y { background: #ffffe1; }
.grid tbody tr:nth-child(n) td.red { background: #f8b4a6; }
.grid tbody tr:nth-child(n) td.green { background: #8bce83; }
.grid tbody tr:nth-child(n) td.ind { padding: 0; background: #fff; border-bottom: 0; }
.grid .b { font-weight: bold; }
.grid .num { text-align: right; }
.grid .mid { text-align: center; }
.grid .small { font-size: 9px; }
.grid td a { font-size: 12px; text-underline-offset: 2px; }
.grid td.ic { padding: 1px; }
.chip { display: grid; place-items: center; height: 17px; }
.chip .i16 { width: 15px; height: 15px; }
.chip.g { background: #8bce83; }
.chip.s { background: #f8b4a6; }
.bar { position: absolute; left: 1px; top: 1px; height: 17px; background: #8bce83; }
.bar.full { background: #ffff80; }
.pct { position: relative; }
.pct.full { color: #000080; }
.pct.over { color: #7a3c78; }
.grid input { appearance: none; display: block; position: relative; width: 13px; height: 13px; margin: 0 auto; border: 1px solid #333; background: #fff; }
.grid input.part::after { content: ""; position: absolute; left: 2px; top: 2px; width: 7px; height: 7px; background: #333; }
.grid input:checked::after { content: ""; position: absolute; left: 4px; top: 0; width: 4px; height: 8px; border: solid #333; border-width: 0 1px 1px 0; transform: rotate(40deg); }
.sums { display: flex; align-items: center; height: 25px; border-top: 2px solid #d9d9d9; border-bottom: 1px solid #a9a9a9; }
.sumind { width: 12px; height: 22px; border-right: 1px solid #a9a9a9; }
.sums output { width: 58px; height: 20px; margin-left: 2px; padding-right: 3px; border: 1px solid #d0d3d4; background: #e4e9ea; line-height: 18px; text-align: right; }
.filterline { height: 25px; padding-left: 5px; border-bottom: 1px solid #fff; line-height: 24px; }
.vscroll { display: flex; flex-direction: column; align-items: center; padding: 3px 0 2px; }
.vscroll .thumb { width: 15px; height: 39%; margin: 2px 0 auto; background: #cdcdcd; }
.hscroll { grid-column: 1 / -1; display: flex; align-items: center; height: 16px; padding: 0 18px 0 2px; }
.hscroll .track { flex: 1; margin: 0 10px 0 3px; }
.hscroll .thumb { display: block; width: 83%; height: 15px; background: #cdcdcd; }

.tabs { display: flex; align-items: flex-start; height: 22px; background: #efefef; }
.tabs button { display: flex; align-items: center; gap: 7px; height: 19px; padding: 0 7px 0 5px; border: 1px solid #dcdcdc; border-width: 0 1px 1px 0; white-space: nowrap; }
.tabs .on { height: 21px; padding-left: 8px; background: #fff; font-weight: bold; }

.brand { display: flex; align-items: center; gap: 5px; margin: auto 41px 0 auto; color: #ececf0; font: bold 26px/22px "DejaVu Sans", sans-serif; }

/* taskbar */
.taskbar { display: flex; justify-content: space-between; flex: none; height: 40px; background: #101010; color: #f0f0f0; font: 12px "Open Sans", sans-serif; }
.apps, .tray { display: flex; align-items: center; }
.apps button { display: grid; place-items: center; width: 40px; height: 40px; margin-right: 9px; }
.apps .sliver { width: 2px; height: 16px; margin-right: 18px; background: #fbe28a; }
.apps .active { border-bottom: 2px solid #76b9ed; padding-top: 2px; }
.tray { padding-right: 3px; }
.tray::after { content: ""; height: 40px; border-left: 1px solid #777; }
.grip { width: 4px; height: 16px; border: solid #555; border-width: 0 1px; margin-right: 9px; }
.desktop { width: 51px; font-size: 11px; }
.more { height: 34px; font-size: 14px; width: 18px; }
.caret { width: 14px; height: 14px; margin-right: 9px; }
.net { width: 18px; height: 16px; margin-right: 9px; }
.lang { width: 35px; font-size: 11px; }
.when { width: 54px; text-align: center; font-size: 11px; line-height: 18px; }
.note { width: 18px; height: 18px; margin: 0 19px 0 18px; }
```

FILE: app.js
```js
const icon = (name, size) => `<svg class="i${size}"><use href="#${name}"/></svg>`;
const esc = (s) => s.replace(/&/g, "&amp;").replace(/</g, "&lt;").replace(/>/g, "&gt;");

// [icon, label, state, children]; state: "+" closed, "-" open, "" leaf
const menu = [
  ["gears", "Entwicklung", "+"], ["plan", "Planung", "+"], ["folder", "Dashboards / Center", "+"],
  ["draft", "Arbeitsvorbereitung", "+"], ["shake", "Verkauf", "+"], ["cart", "Einkauf", "+"],
  ["gears", "Planung und Fertigung", "+"], ["award", "Qualitätsmanagement", "+"],
  ["clock", "Betriebsdatenerfassung", "+"], ["cabinet", "Lagerverwaltung", "+"],
  ["gold", "Anlagen- / Projektverwaltung", "+"], ["register", "Eingangsrechnungen", "+"],
  ["register", "Ausgangsrechnungen", "+"], ["chart", "Management und Controlling", "+"],
  ["people", "Personalmanagement", "+"], ["team", "Teamlead-Center", ""],
  ["building", "Stammdaten", "-", [
    ["folder", "Adressen", "+"],
    ["artikel", "Artikel und Arbeitspakete", "-", [
      ["truck", "Artikel-Center", ""], ["nuts", "Artikelverwaltung", "", null, true],
      ["gridi", "Artikelverzeichnis", ""], ["pin", "Artikel-Code", ""], ["esl", "ESL Verwaltung", ""],
      ["bluebox", "Arbeitspakete", "+"], ["globe", "Varianten", "+"],
      ["folder", "Vorauswahl Bezeichnung, Dimension, Material", "+"],
      ["toolbox", "Werkzeug- / Leihgerät- / Inventarverwaltung", ""],
      ["invbox", "Inventarisierungs-Nummernkreise", ""], ["box", "Ausgabe", ""], ["folder", "Zubehör", "+"]
    ]],
    ["folder", "Vorgaben", "+"]
  ]],
  ["doc", "Dokumentenverwaltung", ""], ["info", "Informationsmanagement", "+"],
  ["battery", "Energiemanagement", "+"], ["server", "Systemprogramme", "+"], ["door", "Anwendung schließen", ""]
];
const branch = (items) => items.map(([ic, label, state, kids, sel]) =>
  `<li><div class="node${state ? "" : " leaf"}"><button class="exp ${state === "+" ? "plus" : state ? "" : "none"}" aria-label="${label} auf-/zuklappen"></button><span class="dots"></span>${icon(ic, 24)}<a href="#"${sel ? ' class="sel"' : ""}>${label}</a></div>${kids ? `<ul>${branch(kids)}</ul>` : ""}</li>`).join("");
document.getElementById("tree").innerHTML = branch(menu);

// module bar: icon, label, width
const modules = [["clock", "Persönliches", 92], ["people2", "Vertrieb", 69], ["cart", "Einkauf", 67], ["shake", "Warenwirtschaft", 114],
  ["money", "Rechnungswesen", 119], ["bars", "Controlling", 88], ["people", "Personal", 74], ["proj", "Projekte", 69],
  ["gear", "Fertigung", 79], ["cabinet", "Lager", 58], ["ribbon", "Qualität", 69], ["service", "Wartung/Service", 116]];
document.getElementById("modules").innerHTML = modules.map(([ic, label, w]) =>
  `<a href="#" style="width:${w}px"${label === "Fertigung" ? ' class="on"' : ""}>${icon(ic, 16)}<span>${label}</span></a>`).join("") +
  `<button aria-label="Fenster">${icon("window", 16)}</button>`;

const widths = [12, 60, 50, 40, 40, 40, 40, 40, 40, 120, 40, 140, 20, 180, 50, 50, 60, 150, 55, 50, 40, 110, 90, 55, 50, 0];
document.getElementById("cols").innerHTML = widths.map((w) => `<col${w ? ` class="c-${w}"` : ""}>`).join("");
const heads = ["", ">ABK-In", "ABK-Typ", "Notiz v", "Einkauf", "Lager:", "Stückli", "Fehlteil", "ABK-B", ">Identifikator", "Status-", ">Artikel / Arbeitspaket (A",
  "Ze", "Artikelbezeichnung", "Menge (", "Offen", "% Erledigt", "Noch zu bearbeitende AG", "ET", "Termin (E", "plantaf", ">Auftrag-Nr.", ">Bestelladress", "Termin (A", "Termin (", "Abteilung (Kostenstelle)"];
document.getElementById("heads").innerHTML = heads.map((h, i) => i === 0
  ? `<th><svg class="i12" viewBox="0 0 12 12"><path d="M5 1.5h5M5 4.5h5M5 7.5h5M5 10.5h5M3 3h1M3 6h1M3 9h1" stroke="#333"/></svg></th>`
  : `<th><div>${h[0] === ">" ? icon("arrow", 12) + h.slice(1) : h}</div></th>`).join("");

const short = { W: "W.13.N-272.371 /C", P: "G.PKW.A-1168534 /A", G: "GETRIEBE-G...", T: "Trainingsfabrik", N: "Welle Nut", H: "Hommel-Etamic C505, Nr 10070580", K: "Serivce/Reperatur Kolben", J: "Getriebe PKW" };
// index;typ;flags;identifikator;status;artikel;ze;bezeichnung;menge;offen;%;noch;et;termin;plan;auftrag;adresse;termin;kw;abteilung
// flags: L stock, S parts list, F missing, B booked; "!" marks a late week, "*" a green order
const data = `10026;;F;I | PA24-00114/10-...;;W;R;N;10,00;10;0;DRE-001->!GLU->SAG-005;22.01.24;202404;m;AG24-00114;G;;;
10006;;B;I | LA24-00103 | 1;;L.100X1000-0001;;Stirnrad;35,00;35;0;SAG-005;29.01.24;202551;m;;STA;;;
10041;BGr-STD;;I | LA24-00106 | 10;;PC-MONT;;PC Montiert;1,00;1;100;AG nicht vorhanden;15.02.24;;m;;AUTO-AG;;;
10003;QAB;SF;4200020;;W;R;N;525,00;525;0;FRA-001->QS-001->!GLU->SAG-0...;26.02.24;!202551;c;AG24-00104;STA;11.02.24;202406;
10005;;B;I | LA24-00102 | 1;;W;R;N;215,00;214;0;SAG-005->QS-001->!GLU;28.02.24;!202551;c;*AG24-00108;G;02.02.24;202405;
10084;;B;E.AG24-00121;;00082571;;H;40,00;;0;MON-001;17.04.24;!202551;c;AG24-00121;G;15.03.24;202411;
10085;;B;E.AG24-00121;;00082571;;H;80,00;;0;MON-001;17.04.24;!202530;c;AG24-00121;G;15.03.24;202411;
10086;;B;E.AG24-00121;;00082571;;H;50,00;;0;MON-001;17.04.24;!202534;c;AG24-00121;G;15.03.24;202411;
10033;;B;I | LA25-00130 | 10;;CT-K255-100;;K;3,00;3;12;DRE-001->SBM-001->FRA-001->!...;13.05.24;;m;AG24-00114;G;;;T
10034;;LSB;I | PA24-00114/20-...;;W;R;N;3,00;3;0;SAG-005->DRE-001->!GLU->QS-0...;13.05.24;;m;AG24-00114;G;;;
10071;;B;I | LA24-00108 | 10;;W;R;N;10,00;10;0;SAG-005->DRE-001->!GLU->QS-0...;13.05.24;!202551;c;AG24-00104;STA;11.02.24;202406;
10072;;B;E.AG24-00121;;W;R;N;1,00;1;1;SAG-005->DRE-001->!GLU;13.05.24;!202551;c;AG24-00121;G;15.03.24;202411;
10042;;B;4200020;;W;R;N;741,00;741;0;SAG-005->DRE-001->!GLU->QS-0...;14.05.24;!202551;c;AG24-00104;STA;11.02.24;202406;
10102;BGr-STD;SB;I | LA24-00111 | 10;;W.13.N-999.999/TEST;;N;1,00;1;9;SAG-002->FRA-001->QSM;10.06.24;202551;m;;G;;;T
10004;;F;I | LA24-00101 | 1;;W;R;N;70,00;70;21;SAG-005->DRE-001->!GLU;19.06.24;!202551;c;AG24-00104;STA;11.02.24;202406;
10104;BGr-STD;S;I | PA24-00143/10 | ...;;P;;J;2,00;2;0;DRE-001->SBM-001->FRA-001->!...;13.07.24;202530;m;*AG24-00143;AUTO-AG;;;
10121;;B;I | LA24-00112-10 | ...;;W;R;N;120,00;120;0;FRA-001->QS-001->!GLU;22.07.24;202551;m;*LA24-00112-10;#;;;T
10122;;B;I | LA24-00112-10 | ...;;W;R;N;180,00;180;0;FRA-001->QS-001->!GLU;22.07.24;202551;m;*LA24-00112-10;#;;;T
10127;;B;I | LA24-00112-10 | ...;;W;R;N;60,00;60;0;FRA-001->QS-001->!GLU;22.07.24;202551;m;*LA24-00112-10;#;;;T
10111;;B;E.AG24-00107;;W;R;N;1,00;1;0;FRA-001->QS-001->!GLU;25.07.24;202551;m;*ABK-10109;#;;;T
10133;QNA;S;5200001;;G.PKW.A-1168534 /A /20...;;Getriebe\u00a0 PKW\u00a0 -\u00a0 Revision\u00a0 2021;1,00;;0;QSM;25.07.24;;m;AG25-00201;AUTO-AG;;;
10134;QNA;B;5200006;;5200006;;;0,00;;100;QSM;25.07.24;202551;m;;;;;
10110;;B;E.AG24-00107;;CT-K255-100;;K;1,00;;1;DRE-001->SBM-001->!GLU->FRA...;26.07.24;;m;AG24-00107;G;11.02.24;202406;T
10109;;S;E.AG24-00107;;CT-SN350L-TOP8;;Serivce/Reperatur Ölpumpe;1,00;;0;FRA-001->QS-001->!GLU->DRE-0...;30.07.24;;m;AG24-00117;G;24.01.25;202504;
10073;;B;;;W;R;N;12,00;12;0;SAG-005->DRE-001->!GLU->QS-0...;01.08.24;!202551;c;AG24-00104;STA;11.02.24;202406;
10118;;F;E.AG24-00122;;W;R;N;900,00;870;0;FRA-001->QS-001->MON-ELEK->...;05.08.24;!202534;c;AG24-00122;G;09.07.24;202428;T
10119;PS;F;E.AG24-00122;;S.W.13.1100001;;Dichtsatz Welle 13 mm;300,00;;100;AG nicht vorhanden;05.08.24;!202606;c;AG24-00102;AUTO-AG;26.01.24;202404;
10128;;;I | PA24-00148/10 | ...;;CT-K255-100;;K;1,00;1;82;!GLU->FRA-001->MON-ELEK->S...;06.08.24;202551;m;*AG24-00148;G;;;T
10120;BGr-ST...;SF;I | LA24-00112 | 10;;P;;J;60,00;60;0;FRA-001->QS-001->!GLU->DRE-0...;23.09.24;;m;AG25-00251;CIMPCS;31.03.26;202614;T
10116;;SF;E.AG24-00122;;P;;J;300,00;;0;FRA-001->QS-001->MON-ELEK->...;01.10.24;!202534;c;AG24-00122;G;09.07.24;202428;
10154;;;I | LA24-00115 | 10;;W;R;N;1,00;1;0;SAG-005->DRE-001->!GLU->QS-0...;01.10.24;!202551;c;AG24-00104;STA;11.02.24;202406;
10043;;;I | LA24-00107 | 10;;W;R;N;100,00;100;0;SAG-005->MON-001->SAG-002;13.12.24;!202551;c;AG24-00104;STA;11.02.24;202406;T
10140;BGr-STD;S;I | PA24-00161/10 | ...;;P;;J;20,00;20;0;DRE-001->SBM-001->FRA-001->!...;13.12.24;202551;m;*AG24-00161;AUTO-AG;;;T
10130;F-ABK;B;I | PA24-00118-10 | ...;F-ABK;P;;J;100,00;100;3;MON-001->FRA-001;23.12.24;;m;AG25-00251;CIMPCS;31.03.26;202614;T`;

const td = (html, cls = "") => `<td${cls ? ` class="${cls}"` : ""}>${html}</td>`;
const link = (text, cls) => td(text ? `<a href="#">${text}</a>` : "", cls);
const chip = (on, name, tone) => td(on ? `<div class="chip ${tone}">${icon(name, 16)}</div>` : "", "ic");
document.getElementById("rows").innerHTML = data.split("\n").map((line, n) => {
  const [idx, typ, fl, ident, status, art, ze, bez, menge, offen, pct, noch, et, week, plan, order, addr, date, kw, dept] =
    line.split(";").map((v) => esc(short[v] || v));
  const p = Number(pct);
  const tone = p === 100 ? " full" : "";
  return "<tr>" +
    td(n ? "" : '<svg class="i12" viewBox="0 0 12 12"><path d="M4 1l5 5-5 5z"/></svg>', "ind") +
    td(idx, "y b num") + td(typ) + td("") + td("") + chip(fl.includes("L"), "drawer", "s") +
    chip(fl.includes("S"), "cubes", "") + chip(fl.includes("F"), "warn", "s") + chip(fl.includes("B"), "drawer", "g") +
    link(ident, "y") + td(status) + td(art, "y b") + td(ze && "R...") + td(bez) + td(menge, "num") + td(offen, "y b num") +
    td((p > 1 ? `<span class="bar${tone}" style="width:${Math.round(p * 0.57)}px"></span>` : "") + `<span class="pct${tone || (p > 50 ? " over" : "")}">${pct} %</span>`, "mid") +
    td(noch, "small") + td(et, "y b") + td(week.replace("!", ""), week[0] === "!" ? "num red" : "num") +
    td(`<input type="checkbox" aria-label="Plantafel ${idx}"${plan === "c" ? " checked" : ' class="part"'}>`) +
    link(order.replace("*", ""), order[0] === "*" ? "green" : "") + link(addr, "y") + td(date) + td(kw, "num") + td(dept, "small") + "</tr>";
}).join("");
```
